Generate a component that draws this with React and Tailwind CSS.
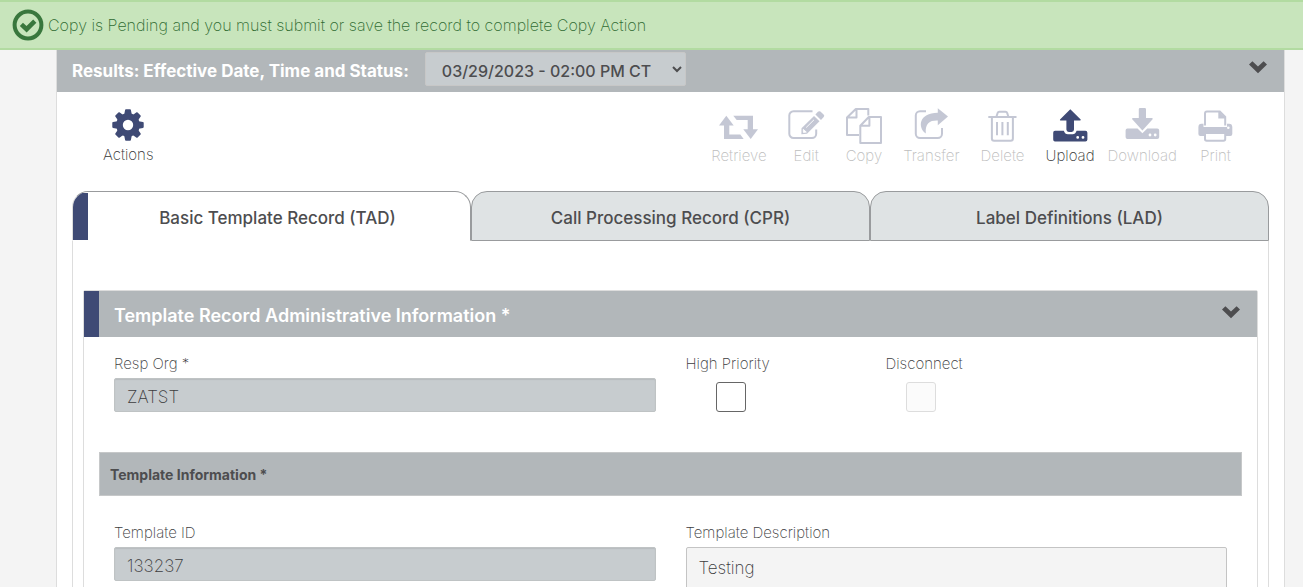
import React, { useState } from 'react';

const CheckIcon = () => (
  <svg width="32" height="32" viewBox="0 0 32 32" fill="none" stroke="#39773d" className="shrink-0" aria-hidden="true">
    <circle cx="16" cy="16" r="13.4" strokeWidth="4" />
    <path d="M9.4 15.3L14.6 20.2 22.8 12.2" strokeWidth="4.6" />
  </svg>
);

const ChevronIcon = () => (
  <svg width="18" height="13" viewBox="0 0 18 13" fill="#4d4d4f" aria-hidden="true">
    <path d="M0 3.6L3.4 .3 9 5.6 14.6 .3 18 3.6 9 12.2Z" />
  </svg>
);

const GearIcon = () => (
  <svg width="32" height="32" viewBox="-16 -16 32 32" fill="currentColor" aria-hidden="true">
    <circle r="8.5" fill="none" stroke="currentColor" strokeWidth="6.6" />
    {[0, 45, 90, 135].map((angle) => (
      <g key={angle} transform={`rotate(${angle})`}>
        <path d="M-3.8 -10.5L-2.9 -15Q-2.8 -15.7 -2.1 -15.7H2.1Q2.8 -15.7 2.9 -15L3.8 -10.5Z" />
        <path d="M-3.8 10.5L-2.9 15Q-2.8 15.7 -2.1 15.7H2.1Q2.8 15.7 2.9 15L3.8 10.5Z" />
      </g>
    ))}
  </svg>
);

const RetrieveIcon = () => (
  <svg width="39" height="36" viewBox="0 -7 39 36" fill="currentColor" aria-hidden="true">
    <path d="M7.3 .7L14.7 10.5H10.3V19.6H21.3L24.7 24H5V10.5H0Z" />
    <path d="M31.7 24L24.3 14.2H28.7V5.1H17.7L14.3 .7H34V14.2H39Z" />
  </svg>
);

const EditIcon = () => (
  <svg width="37" height="36" viewBox="0 -2 37 36" fill="currentColor" aria-hidden="true">
    <path
      d="M24.5 1.3H5.5A4.2 4.2 0 0 0 1.3 5.5V23.7A4.2 4.2 0 0 0 5.5 27.9H24A4.2 4.2 0 0 0 28.2 23.7V19.5"
      fill="none"
      stroke="currentColor"
      strokeWidth="2"
    />
    <path d="M13.5 18.3L26 6 31.5 11.3 19 23.8 13.4 24.2Z" />
    <path d="M27.4 4.6L29.9 1.8Q31 .6 32.4 1.6L35.6 4.6Q36.9 5.8 35.7 7.1L33 9.9Z" />
    <path d="M15.3 19.4L18.3 22.1 15.4 22.4ZM18.2 17.5L26 9.8" fill="white" stroke="white" strokeWidth="0.9" />
  </svg>
);

const CopyIcon = () => (
  <svg width="36" height="36" viewBox="0 0 36 36" fill="none" stroke="currentColor" strokeWidth="2" strokeLinejoin="round" aria-hidden="true">
    <path d="M13 27H1V9.5L9.8 1H22.3V7.5M10.5 1.5V9.5H1.5" />
    <path d="M14.3 17.7L22.8 9H35V35H14.3ZM23.4 9.5V17.7H14.8" />
  </svg>
);

const TransferIcon = () => (
  <svg width="35" height="36" viewBox="0 0 35 36" fill="currentColor" aria-hidden="true">
    <path d="M12 3.3H6A4.2 4.2 0 0 0 1.8 7.5V25.8A4.2 4.2 0 0 0 6 30H23.8A4.2 4.2 0 0 0 28 25.8V20" fill="none" stroke="currentColor" strokeWidth="2" />
    <path d="M23.8 .3L34 8.5 23.8 17.3V12.6C16 12.3 11 15 11.8 25.6 3.5 19.5 4.6 5 23.8 4.8Z" />
  </svg>
);

const DeleteIcon = () => (
  <svg width="29" height="36" viewBox="0 -2 29 36" fill="none" stroke="currentColor" strokeWidth="2" aria-hidden="true">
    <path d="M.3 7H28.5M8.5 6.5L9.6 3Q10 1.7 11.3 1.7H17.5Q18.8 1.7 19.2 3L20.3 6.5" />
    <path d="M3.9 7V28.5Q3.9 30.7 6.1 30.7H22.7Q24.9 30.7 24.9 28.5V7" />
    <path d="M9 12V25.3M14.4 12V25.3M19.8 12V25.3" />
  </svg>
);

const UploadIcon = () => (
  <svg width="35" height="36" viewBox="0 -1 35 36" fill="currentColor" aria-hidden="true">
    <path d="M17.3 .3L27.7 10.4Q28 11.3 27 11.4H21V20.6Q21 23 18.6 23H15.8Q13.4 23 13.4 20.6V11.4H7.6Q6.6 11.3 7 10.4Z" />
    <path
      d="M2 21.7H10.8Q12 25.2 14.8 25.2H19.6Q22.4 25.2 23.6 21.7H32.4Q34.4 21.7 34.4 23.7V30.5Q34.4 32.5 32.4 32.5H2Q.2 32.5 .2 30.5V23.7Q.2 21.7 2 21.7ZM24.7 27A1.4 1.4 0 1 0 24.7 29.8 1.4 1.4 0 1 0 24.7 27ZM30 27A1.4 1.4 0 1 0 30 29.8 1.4 1.4 0 1 0 30 27Z"
      fillRule="evenodd"
    />
  </svg>
);

const DownloadIcon = () => (
  <svg width="35" height="36" viewBox="0 0 35 36" fill="currentColor" aria-hidden="true">
    <path d="M15 0H19.8Q21 0 21 1.2V10H27Q28.2 10.2 27.6 11.3L17.4 22.6 7.2 11.3Q6.6 10.2 7.8 10H13.8V1.2Q13.8 0 15 0Z" />
    <path
      d="M2.4 20.6H12.5L17.4 25.3 22.3 20.6H32.2Q34.2 20.6 34.2 22.6V29Q34.2 31 32.2 31H2.4Q.6 31 .6 29V22.6Q.6 20.6 2.4 20.6ZM25 25.6A1.4 1.4 0 1 0 25 28.4 1.4 1.4 0 1 0 25 25.6ZM30.2 25.6A1.4 1.4 0 1 0 30.2 28.4 1.4 1.4 0 1 0 30.2 25.6Z"
      fillRule="evenodd"
    />
  </svg>
);

const PrintIcon = () => (
  <svg width="35" height="36" viewBox="0 -2 35 36" fill="currentColor" aria-hidden="true">
    <path d="M3.5 13.8H5.5V17H29V13.8H31Q34.3 13.8 34.3 17.2V24Q34.3 26 32.3 26H2.4Q.4 26 .4 24V17.2Q.4 13.8 3.5 13.8Z" />
    <path d="M7 15.5V3.5Q7 1.6 8.9 1.6H21.8L27.2 7V15.5M21.3 2V7.5H27" fill="none" stroke="currentColor" strokeWidth="2" />
    <path d="M21.3 2V7.5H27Z" />
    <circle cx="30.3" cy="17.8" r="1.3" fill="white" />
    <path d="M7 23H27.2V29Q27.2 30.7 25.5 30.7H8.7Q7 30.7 7 29Z" fill="white" stroke="currentColor" strokeWidth="2" />
  </svg>
);

const tools = [
  { label: 'Retrieve', icon: RetrieveIcon },
  { label: 'Edit', icon: EditIcon },
  { label: 'Copy', icon: CopyIcon },
  { label: 'Transfer', icon: TransferIcon },
  { label: 'Delete', icon: DeleteIcon },
  { label: 'Upload', icon: UploadIcon, enabled: true },
  { label: 'Download', icon: DownloadIcon },
  { label: 'Print', icon: PrintIcon },
];

const tabs = ['Basic Template Record (TAD)', 'Call Processing Record (CPR)', 'Label Definitions (LAD)'];

const ToolButton = ({ label, icon: Icon, enabled }) => (
  <button
    type="button"
    disabled={!enabled}
    className="group flex flex-col items-center pr-[3px] pl-[10px] disabled:pr-[11px]"
  >
    <span className="text-[#3f4a75] group-disabled:opacity-30">
      <Icon />
    </span>
    <span className="mt-[2px] text-[15px] leading-[20px] text-[#333333] group-disabled:text-[#bdbdbd]">{label}</span>
  </button>
);

const fieldClass =
  'mt-1 block h-[34px] w-full rounded-[2px] border border-[#bfc3c4] bg-[#c7cccf] px-3 pt-1 text-[17px] text-[#3c3c3e] shadow-[inset_0_1px_1px_rgba(0,0,0,0.08)]';

const App = () => {
  const [activeTab, setActiveTab] = useState(0);
  const [highPriority, setHighPriority] = useState(false);
  const [description, setDescription] = useState('Testing');

  return (
    <div className="h-screen overflow-hidden bg-[#f4f4f4] font-['Inter','Liberation_Sans',sans-serif] font-extralight text-[15px] leading-[20px] text-[#3c3c3e]">
      <div role="status" className="flex h-[50px] items-center gap-1 border-y-2 border-[#b2dba1] bg-[#c8e5bc] pl-3 text-[16px] text-[#2f6b31]">
        <CheckIcon />
        <span>Copy is Pending and you must submit or save the record to complete Copy Action</span>
      </div>

      <main className="mr-[18px] ml-14 border-x border-[#dddddd] bg-white">
        <header className="flex h-[42px] items-center bg-[#b2b7ba] pr-[17px] pl-[15px]">
          <label htmlFor="effective" className="text-[17px] font-bold text-white">
            Results: Effective Date, Time and Status:
          </label>
          <select
            id="effective"
            className="mb-1 ml-4 h-[34px] w-[261px] rounded-[2px] border border-[#c7c7c7] bg-[#c7cccf] pt-[3px] pl-3 text-[16px] font-medium text-[#4d4d4f]"
          >
            <option>03/29/2023 - 02:00 PM CT</option>
          </select>
          <button type="button" aria-label="Collapse results" className="mb-2 ml-auto">
            <ChevronIcon />
          </button>
        </header>

        <div className="flex items-start justify-between pt-4 pr-10 pl-9">
          <button type="button" className="flex flex-col items-center gap-1 px-[10px] pt-px text-[#3f4a75]">
            <GearIcon />
            <span className="text-[#333333]">Actions</span>
          </button>
          <div className="flex">
            {tools.map((tool) => (
              <ToolButton key={tool.label} {...tool} />
            ))}
          </div>
        </div>

        <div className="mt-[25px] px-[15px]">
          <div role="tablist" className="grid grid-cols-3">
            {tabs.map((tab, i) => (
              <button
                key={tab}
                type="button"
                role="tab"
                aria-selected={activeTab === i}
                onClick={() => setActiveTab(i)}
                className={`relative h-[50px] overflow-hidden rounded-t-[16px] border border-[#999b9d] pt-1 text-[17px] font-medium text-[#4d4d4f] ${
                  activeTab === i ? 'border-b-white border-l-[#dddddd] bg-white pl-3' : 'bg-[#dfe3e4]'
                }`}
              >
                {activeTab === i && <span className="absolute top-px bottom-0 left-0 w-[15px] bg-[#3f4a75]" />}
                {tab}
              </button>
            ))}
          </div>

          <div className="border-x border-[#dddddd] px-[10px] pt-[49px]">
            <section className="rounded-t-[2px] border border-[#dddddd]">
              <header className="flex h-[46px] items-center border-l-[15px] border-[#3f4a75] bg-[#b2b7ba] pr-[17px] pl-[15px]">
                <h2 className="pt-1 text-[18px] font-semibold text-white">Template Record Administrative Information *</h2>
                <button type="button" aria-label="Collapse section" className="mb-1 ml-auto">
                  <ChevronIcon />
                </button>
              </header>

              <div className="px-[15px] pt-[17px]">
                <div className="grid grid-cols-2 gap-[30px] px-[15px]">
                  <div>
                    <label htmlFor="respOrg">Resp Org *</label>
                    <input id="respOrg" readOnly value="ZATST" className={fieldClass} />
                  </div>
                  <div className="flex">
                    <div className="w-[200px]">
                      <label htmlFor="highPriority">High Priority</label>
                      <input
                        id="highPriority"
                        type="checkbox"
                        checked={highPriority}
                        onChange={(e) => setHighPriority(e.target.checked)}
                        className="mt-2 ml-[30px] block size-[30px] appearance-none rounded-[3px] border border-[#666666] bg-white checked:bg-[#3f4a75]"
                      />
                    </div>
                    <div>
                      <label htmlFor="disconnect">Disconnect</label>
                      <input
                        id="disconnect"
                        type="checkbox"
                        disabled
                        className="mt-2 ml-5 block size-[30px] appearance-none rounded-[3px] border border-[#dddddd] bg-[#fbfbfb]"
                      />
                    </div>
                  </div>
                </div>

                <h3 className="mt-10 flex h-11 items-center border border-[#c6c8c9] bg-[#b2b7ba] px-[10px] pt-px text-[14px] font-bold text-[#4d4d4f]">
                  Template Information *
                </h3>

                <div className="grid grid-cols-2 gap-[30px] px-[15px] pt-[27px]">
                  <div>
                    <label htmlFor="templateId">Template ID</label>
                    <input id="templateId" readOnly value="133237" className={fieldClass} />
                  </div>
                  <div>
                    <label htmlFor="templateDescription">Template Description</label>
                    <textarea
                      id="templateDescription"
                      value={description}
                      onChange={(e) => setDescription(e.target.value)}
                      className="mt-1 block h-20 w-full resize-none rounded-[2px] border border-[#c4c4c4] bg-[#f4f4f4] px-3 py-2 text-[17px] leading-[24px]"
                    />
                  </div>
                </div>
              </div>
            </section>
          </div>
        </div>
      </main>
    </div>
  );
};

export default App;
